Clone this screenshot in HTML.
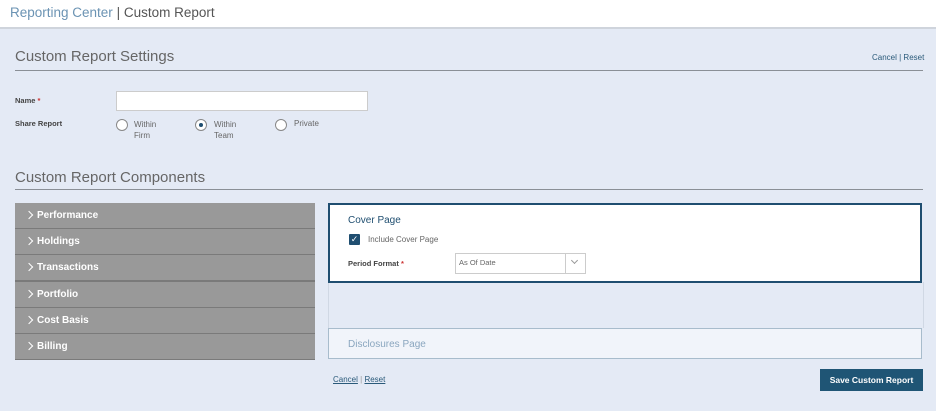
<!DOCTYPE html><html><head><style>
body{margin:0;width:936px;height:411px;background:#e4eaf5;font-family:"Liberation Sans",sans-serif;position:relative;overflow:hidden}
.a{position:absolute}
.hdr{left:0;top:0;width:936px;height:27px;background:#fff;border-bottom:2px solid #cfd4dc}
.t{font-size:13px;color:#666}
.lbl{font-size:7.5px;font-weight:bold;color:#444}
.radio{width:10px;height:10px;border:1px solid #888;border-radius:50%;background:#fff}
.row{left:15px;width:300px;height:25px;background:#999;border-bottom:1px solid #7a7a7a;color:#fff;font-weight:bold;font-size:10px;line-height:25px}
.row span{margin-left:22px}
.row:before{content:"";position:absolute;left:11px;top:9px;width:5px;height:5px;border-top:1px solid #fff;border-right:1px solid #fff;transform:rotate(45deg)}
a{color:#2a5a7a;text-decoration:underline}
</style></head><body>
<div class="a hdr"></div>
<div class="a" style="left:10px;top:5px;font-size:13.5px;color:#6b93b3">Reporting Center <span style="color:#555">| Custom Report</span></div>
<div class="a" style="left:15px;top:48px;font-size:15px;color:#666">Custom Report Settings</div>
<div class="a" style="left:15px;top:70px;width:908px;height:1px;background:#8a8f96"></div>
<div class="a" style="left:872px;top:53px;font-size:8px;color:#2a5a7a">Cancel | Reset</div>
<div class="a lbl" style="left:15px;top:96px">Name <span style="color:#c33">*</span></div>
<div class="a" style="left:116px;top:91px;width:250px;height:18px;background:#fff;border:1px solid #ccc"></div>
<div class="a lbl" style="left:15px;top:119px">Share Report</div>
<div class="a radio" style="left:116px;top:119px"></div>
<div class="a" style="left:134px;top:119px;font-size:8px;color:#666;line-height:11px">Within<br>Firm</div>
<div class="a radio" style="left:195px;top:119px"></div>
<div class="a" style="left:199px;top:123px;width:4px;height:4px;border-radius:50%;background:#1f4e70"></div>
<div class="a" style="left:214px;top:119px;font-size:8px;color:#666;line-height:11px">Within<br>Team</div>
<div class="a radio" style="left:275px;top:119px"></div>
<div class="a" style="left:294px;top:119px;font-size:8px;color:#666">Private</div>
<div class="a" style="left:15px;top:169px;font-size:15px;color:#666">Custom Report Components</div>
<div class="a" style="left:15px;top:189px;width:908px;height:1px;background:#8a8f96"></div>
<div class="a" style="left:15px;top:203px;width:300px;height:157px;background:#7a7a7a"></div>
<div class="a row" style="top:203px"><span>Performance</span></div>
<div class="a row" style="top:229px"><span>Holdings</span></div>
<div class="a row" style="top:255px"><span>Transactions</span></div>
<div class="a row" style="top:282px"><span>Portfolio</span></div>
<div class="a row" style="top:308px"><span>Cost Basis</span></div>
<div class="a row" style="top:334px"><span>Billing</span></div>
<div class="a" style="left:328px;top:282px;width:594px;height:46px;background:#e4eaf5;border-left:1px solid #d0d8e4;border-right:1px solid #d0d8e4"></div>
<div class="a" style="left:328px;top:203px;width:590px;height:76px;background:#fff;border:2px solid #1f4e70"></div>
<div class="a" style="left:348px;top:215px;font-size:10px;color:#1f4e70">Cover Page</div>
<div class="a" style="left:349px;top:234px;width:11px;height:11px;background:#1f4e70;border-radius:1px;color:#fff;font-size:9px;line-height:11px;text-align:center">✓</div>
<div class="a" style="left:368px;top:235px;font-size:8px;color:#666">Include Cover Page</div>
<div class="a lbl" style="left:348px;top:259px">Period Format <span style="color:#c33">*</span></div>
<div class="a" style="left:455px;top:253px;width:129px;height:19px;border:1px solid #ccc;background:#fff"></div>
<div class="a" style="left:459px;top:258px;font-size:7.5px;color:#666">As Of Date</div>
<div class="a" style="left:565px;top:253px;width:1px;height:20px;background:#ccc"></div>
<div class="a" style="left:572px;top:258px;width:4px;height:4px;border-right:1px solid #999;border-bottom:1px solid #999;transform:rotate(45deg)"></div>
<div class="a" style="left:328px;top:328px;width:592px;height:29px;background:#f1f4fa;border:1px solid #a8bccc"></div>
<div class="a" style="left:348px;top:339px;font-size:10px;color:#8aa6bf">Disclosures Page</div>
<div class="a" style="left:333px;top:375px;font-size:8px;color:#2a5a7a"><a>Cancel</a> <span style="color:#999">|</span> <a>Reset</a></div>
<div class="a" style="left:820px;top:369px;width:103px;height:22px;background:#1f5575;color:#fff;font-size:8.5px;font-weight:bold;text-align:center;line-height:22px">Save Custom Report</div>
</body></html>
